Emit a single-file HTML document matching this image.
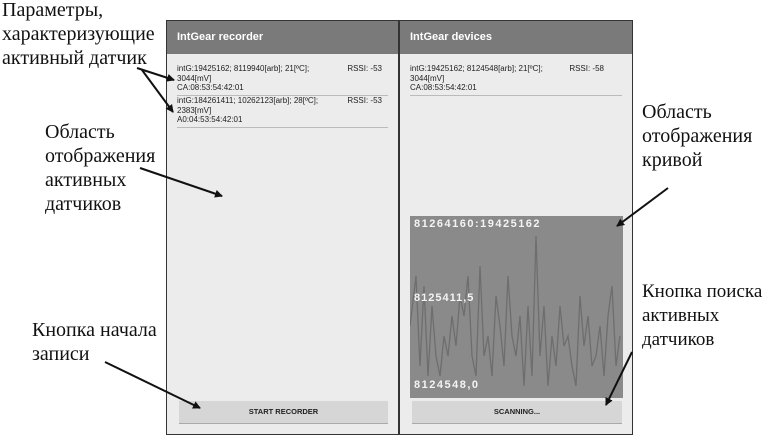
<!DOCTYPE html>
<html><head><meta charset="utf-8"><style>
body{margin:0;width:773px;height:441px;background:#fff;position:relative;overflow:hidden;font-family:"Liberation Sans",sans-serif}
.t{position:absolute;font-family:"Liberation Serif","DejaVu Serif",serif;font-size:20px;line-height:24px;color:#111;white-space:nowrap;z-index:5}
.scr{position:absolute;top:20px;height:415px;background:#ececec;border:1px solid #333;box-sizing:border-box}
.hd{position:absolute;left:0;right:0;top:0;height:33px;background:#7a7a7a;color:#fff;font-size:11px;font-weight:bold;padding:10px 0 0 10px;box-sizing:border-box}
.it{position:absolute;left:10px;right:10px;font-size:8px;line-height:9.5px;color:#222;border-bottom:1.5px solid #bbb;padding-bottom:2px}
.it span{position:absolute;right:6px;top:0}
.btn{position:absolute;bottom:10px;height:22px;left:12px;right:10px;background:#d6d6d6;border-bottom:1.5px solid #aaa;font-size:7.5px;font-weight:bold;text-align:center;line-height:22px;color:#222}
</style></head><body>
<div class="scr" style="left:166px;width:233px">
 <div class="hd">IntGear recorder</div>
 <div class="it" style="top:43px">intG:19425162; 8119940[arb]; 21[ºC];<br>3044[mV]<br>CA:08:53:54:42:01<span>RSSI: -53</span></div>
 <div class="it" style="top:75px">intG:184261411; 10262123[arb]; 28[ºC];<br>2383[mV]<br>A0:04:53:54:42:01<span>RSSI: -53</span></div>
 <div class="btn">START RECORDER</div>
</div>
<div class="scr" style="left:399px;width:234px">
 <div class="hd">IntGear devices</div>
 <div class="it" style="top:43px">intG:19425162; 8124548[arb]; 21[ºC];<br>3044[mV]<br>CA:08:53:54:42:01<span style="right:18px">RSSI: -58</span></div>
 <div style="position:absolute;left:10px;top:195px;width:213px;height:182px;background:#8a8a8a;overflow:hidden">
  <svg width="213" height="182" style="position:absolute;left:0;top:0">
   <polyline fill="none" stroke="#6e6e6e" stroke-width="1.3" points="0,110 6,60 10,150 14,70 18,160 22,90 26,140 30,160 34,120 38,140 42,100 46,130 50,80 54,100 58,60 62,140 66,160 70,50 74,140 78,120 82,160 86,80 90,110 94,150 98,60 102,120 106,140 110,100 114,170 118,90 122,160 126,20 130,140 134,90 138,170 142,120 146,150 150,90 154,130 158,120 162,150 166,170 170,80 174,130 178,100 182,150 186,140 190,110 194,160 198,100 202,70 206,150 210,120"/>
  </svg>
  <div style="position:absolute;left:4px;top:2px;color:#f4f4f4;font-size:11px;font-weight:bold;letter-spacing:1.5px">81264160:19425162</div>
  <div style="position:absolute;left:4px;top:76px;color:#f4f4f4;font-size:11px;font-weight:bold;letter-spacing:1px">8125411,5</div>
  <div style="position:absolute;left:4px;top:163px;color:#f4f4f4;font-size:11px;font-weight:bold;letter-spacing:1.5px">8124548,0</div>
 </div>
 <div class="btn">SCANNING...</div>
</div>

<div class="t" style="left:2px;top:-2px">Параметры,<br>характеризующие<br>активный датчик</div>
<div class="t" style="left:45px;top:120px">Область<br>отображения<br>активных<br>датчиков</div>
<div class="t" style="left:32px;top:318px">Кнопка начала<br>записи</div>
<div class="t" style="left:642px;top:100px">Область<br>отображения<br>кривой</div>
<div class="t" style="left:642px;top:280px;font-size:19px">Кнопка поиска<br>активных<br>датчиков</div>

<svg width="773" height="441" style="position:absolute;left:0;top:0;z-index:6">
 <defs><marker id="a" markerWidth="8" markerHeight="8" refX="7" refY="4" orient="auto" markerUnits="userSpaceOnUse"><path d="M0,0 L8,4 L0,8 z" fill="#111"/></marker></defs>
 <g stroke="#111" stroke-width="2" marker-end="url(#a)">
  <line x1="137" y1="68" x2="174" y2="80"/>
  <line x1="142" y1="70" x2="173" y2="112"/>
  <line x1="140" y1="168" x2="222" y2="196"/>
  <line x1="105" y1="362" x2="200" y2="408"/>
  <line x1="668" y1="188" x2="617" y2="226"/>
  <line x1="632" y1="352" x2="606" y2="405"/>
 </g>
</svg>
</body></html>
